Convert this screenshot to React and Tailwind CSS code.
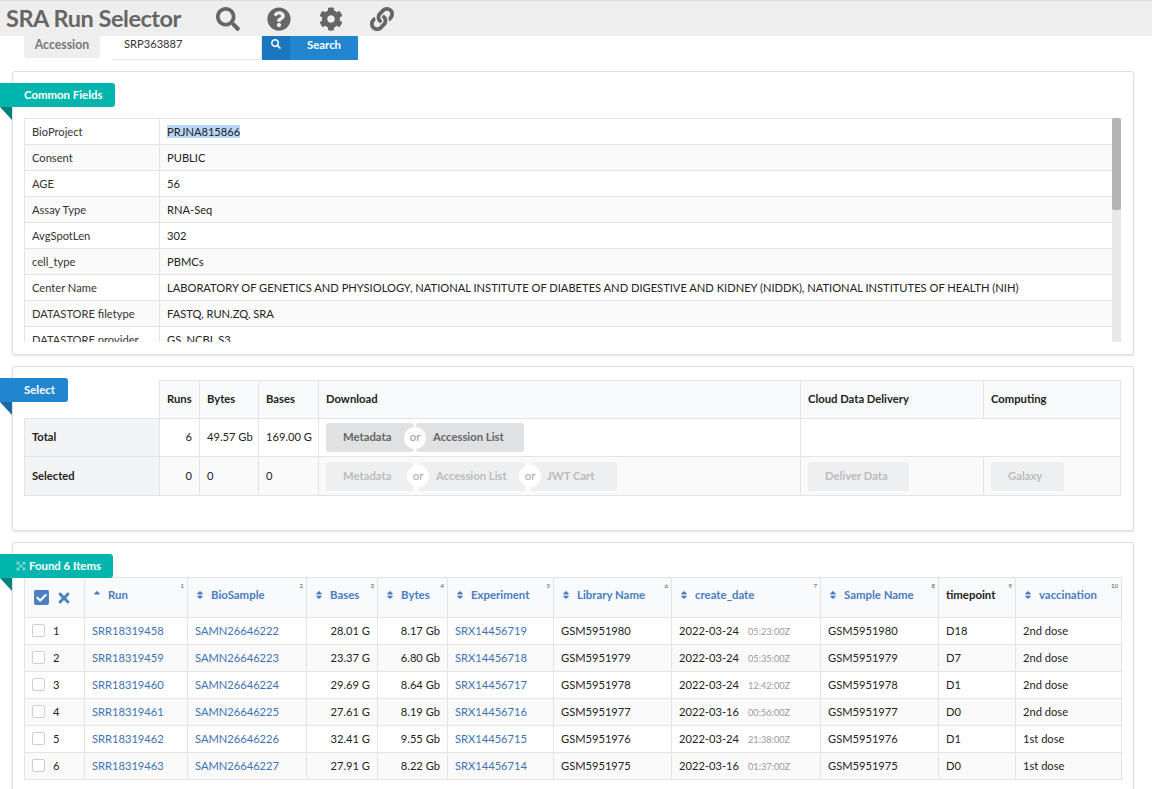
import { FaSearch, FaQuestionCircle, FaCog, FaLink, FaCheckSquare, FaTimes, FaSort, FaSortUp, FaExpandArrowsAlt } from "react-icons/fa";

const fields = [
  ["BioProject", "PRJNA815866"],
  ["Consent", "PUBLIC"],
  ["AGE", "56"],
  ["Assay Type", "RNA-Seq"],
  ["AvgSpotLen", "302"],
  ["cell_type", "PBMCs"],
  ["Center Name", "LABORATORY OF GENETICS AND PHYSIOLOGY, NATIONAL INSTITUTE OF DIABETES AND DIGESTIVE AND KIDNEY (NIDDK), NATIONAL INSTITUTES OF HEALTH (NIH)"],
  ["DATASTORE filetype", "FASTQ, RUN.ZQ, SRA"],
  ["DATASTORE provider", "GS, NCBI, S3"],
];

const rows = [
  ["SRR18319458", "SAMN26646222", "28.01 G", "8.17 Gb", "SRX14456719", "GSM5951980", "2022-03-24", "05:23:00Z", "D18", "2nd dose"],
  ["SRR18319459", "SAMN26646223", "23.37 G", "6.80 Gb", "SRX14456718", "GSM5951979", "2022-03-24", "05:35:00Z", "D7", "2nd dose"],
  ["SRR18319460", "SAMN26646224", "29.69 G", "8.64 Gb", "SRX14456717", "GSM5951978", "2022-03-24", "12:42:00Z", "D1", "2nd dose"],
  ["SRR18319461", "SAMN26646225", "27.61 G", "8.19 Gb", "SRX14456716", "GSM5951977", "2022-03-16", "00:56:00Z", "D0", "2nd dose"],
  ["SRR18319462", "SAMN26646226", "32.41 G", "9.55 Gb", "SRX14456715", "GSM5951976", "2022-03-24", "21:38:00Z", "D1", "1st dose"],
  ["SRR18319463", "SAMN26646227", "27.91 G", "8.22 Gb", "SRX14456714", "GSM5951975", "2022-03-16", "01:37:00Z", "D0", "1st dose"],
];

const headers = [
  { label: "Run", n: 1, w: "w-[103px]", up: true },
  { label: "BioSample", n: 2, w: "w-[119px]" },
  { label: "Bases", n: 3, w: "w-[71px]" },
  { label: "Bytes", n: 4, w: "w-[70px]" },
  { label: "Experiment", n: 5, w: "w-[106px]" },
  { label: "Library Name", n: 6, w: "w-[118px]" },
  { label: "create_date", n: 7, w: "w-[149px]" },
  { label: "Sample Name", n: 8, w: "w-[118px]" },
  { label: "timepoint", n: 9, w: "w-[77px]", plain: true },
  { label: "vaccination", n: 10, w: "w-[106px]" },
];

const Ribbon = ({ bg, fold, className, children }) => (
  <div className={`absolute left-0 z-10 ${className}`}>
    <div className={`flex h-6 items-center rounded-r-[3px] text-[11.4px] font-bold text-white ${bg}`}>{children}</div>
    <div className={`h-[13px] w-3 ${fold} [clip-path:polygon(0_0,100%_0,100%_100%)]`} />
  </div>
);

const Card = ({ className, children }) => (
  <section className={`ml-3 mr-[18px] rounded-[3px] border border-[#dedede] bg-white shadow-[0_1px_2px_rgba(34,36,38,0.12)] ${className}`}>
    {children}
  </section>
);

const th = "border border-[#e3e4e5] bg-[#f9fafb] px-[7px] text-left font-bold";
const td = "border border-[#e3e4e5] px-[7px]";

const GreyButton = ({ w, off, pad, children }) => (
  <span className={`flex h-[29px] items-center whitespace-nowrap rounded-[3px] text-[11.3px] font-bold ${w} ${pad} ${off ? "bg-[#eeeff0] text-[#bcbcbc]" : "bg-[#e0e1e2] text-[#666666]"}`}>
    {children}
  </span>
);

const Or = ({ off }) => (
  <span className={`z-10 -mx-[10px] flex h-[22px] w-[22px] shrink-0 items-center justify-center self-center rounded-full bg-white text-[11.3px] ${off ? "text-[#a9a9a9]" : "text-[#9a9a9a]"}`}>
    or
  </span>
);

export default function App() {
  return (
    <div className="relative h-[789px] overflow-hidden bg-white text-[11.15px] text-[#222222] [font-family:Lato,'Noto_Sans',sans-serif]">
      <header className="flex h-9 items-center border-t border-[#dcdcdc] bg-[#eeeeee] pl-1.5 text-[#666666]">
        <h1 className="w-[210px] text-[23.5px] font-bold tracking-[-0.45px]">SRA Run Selector</h1>
        <div className="flex items-center gap-[27.3px]">
          <FaSearch size={24} />
          <FaQuestionCircle size={24} />
          <FaCog size={24} />
          <FaLink size={24} />
        </div>
      </header>

      <div className="flex h-6 items-start pl-6">
        <div className="flex h-[22px] w-[76px] items-center justify-center rounded-b-[3px] bg-[#eeeeee] pb-1 text-[12.3px] font-bold text-[#777777]">Accession</div>
        <div className="ml-3 flex h-6 w-[150px] items-center rounded-br-[3px] border-b border-r border-[#e4e4e4] pb-1.5 pl-3 text-[#333333]">SRP363887</div>
        <div className="flex h-6 w-24 bg-[#2185d0] text-white">
          <span className="flex h-full w-7 justify-center bg-[#1a76bd] pt-[3px]"><FaSearch size={10} /></span>
          <span className="flex flex-1 items-center justify-center pb-1.5 text-[11.4px] font-bold">Search</span>
        </div>
      </div>

      <Card className="relative mt-[11px] h-[284px] pt-[46px]">
        <div className="ml-[11px] mr-3 h-[224px] overflow-hidden">
          <div className="flex h-full">
            <table className="h-fit w-[1088px] table-fixed border-collapse">
              <tbody>
                {fields.map(([name, value], i) => (
                  <tr key={name} className={`h-[26px] ${i % 2 ? "bg-[#fafafa]" : "bg-white"}`}>
                    <td className={`${td} w-[135px] pt-px text-[#333333]`}>{name}</td>
                    <td className={`${td} border-r-0 pt-px`}>
                      {i === 0 ? <span className="bg-[#b9d6fb]">{value}</span> : value}
                    </td>
                  </tr>
                ))}
              </tbody>
            </table>
            <div className="h-full w-[9px] shrink-0 bg-[#e8e8e8]">
              <div className="h-[92px] rounded-[2px] bg-[#b4b4b4]" />
            </div>
          </div>
        </div>
      </Card>
      <Ribbon bg="bg-[#00b5ad] w-[115px] pl-6" fold="bg-[#00827c]" className="top-[83px]">Common Fields</Ribbon>

      <Card className="mt-[11px] h-[165px] pt-[13px]">
        <table className="ml-[11px] w-[1097px] table-fixed border-collapse">
          <thead>
            <tr className="h-[38px] text-[11.25px]">
              <th className="w-[135px] border-b border-[#e3e4e5]" />
              <th className={`${th} w-10`}>Runs</th>
              <th className={`${th} w-[59px]`}>Bytes</th>
              <th className={`${th} w-[60px]`}>Bases</th>
              <th className={`${th} w-[482px]`}>Download</th>
              <th className={`${th} w-[183px]`}>Cloud Data Delivery</th>
              <th className={th}>Computing</th>
            </tr>
          </thead>
          <tbody>
            <tr className="h-[38px]">
              <td className={`${td} bg-[#f3f4f5] font-bold`}>Total</td>
              <td className={`${td} text-right`}>6</td>
              <td className={`${td} whitespace-nowrap`}>49.57 Gb</td>
              <td className={`${td} whitespace-nowrap`}>169.00 G</td>
              <td className={td}>
                <div className="flex">
                  <GreyButton w="w-[88px]" pad="pl-[17px]">Metadata</GreyButton>
                  <Or />
                  <GreyButton w="w-[108px]" pad="pl-[17px]">Accession List</GreyButton>
                </div>
              </td>
              <td className={`${td} border-r-0`} />
              <td className={`${td} border-l-0`} />
            </tr>
            <tr className="h-[39px] bg-[#fafafa]">
              <td className={`${td} bg-[#f3f4f5] font-bold`}>Selected</td>
              <td className={`${td} text-right`}>0</td>
              <td className={td}>0</td>
              <td className={td}>0</td>
              <td className={td}>
                <div className="flex">
                  <GreyButton off w="w-[87px]" pad="pl-[17px]">Metadata</GreyButton>
                  <span className="w-1" />
                  <Or off />
                  <GreyButton off w="w-[106px]" pad="pl-[17px]">Accession List</GreyButton>
                  <span className="w-1" />
                  <Or off />
                  <GreyButton off w="w-[86px]" pad="pl-4">JWT Cart</GreyButton>
                </div>
              </td>
              <td className={td}>
                <GreyButton off w="w-[101px]" pad="pl-[17px]">Deliver Data</GreyButton>
              </td>
              <td className={td}>
                <GreyButton off w="w-[73px]" pad="pl-[17px]">Galaxy</GreyButton>
              </td>
            </tr>
          </tbody>
        </table>
      </Card>
      <Ribbon bg="bg-[#2185d0] w-[68px] pl-6" fold="bg-[#1a69a4]" className="top-[378px]">Select</Ribbon>

      <Card className="mt-[11px] h-[300px] pt-[34px]">
        <table className="ml-[11px] w-[1096px] table-fixed border-collapse">
          <thead>
            <tr className="h-10 text-[11.4px]">
              <th className={`${th} w-[60px]`}>
                <div className="flex items-center gap-1.5 pl-px text-[#4a7fc1]">
                  <FaCheckSquare size={17} />
                  <FaTimes size={16} />
                </div>
              </th>
              {headers.map((h) => (
                <th key={h.label} className={`${th} ${h.w} relative whitespace-nowrap align-top pt-2 ${h.plain ? "text-[#222222]" : "text-[#4a7cbf]"}`}>
                  <span className="flex items-center gap-1.5">
                    {!h.plain && (h.up ? <FaSortUp size={10} /> : <FaSort size={10} />)}
                    {h.label}
                  </span>
                  <span className="absolute top-[3px] right-[3px] text-[6px] font-normal text-[#555555]">{h.n}</span>
                </th>
              ))}
            </tr>
          </thead>
          <tbody>
            {rows.map((r, i) => (
              <tr key={r[0]} className={`h-[27px] ${i % 2 ? "bg-[#fafafa]" : "bg-white"}`}>
                <td className={td}>
                  <div className="flex items-center gap-2">
                    <span className="h-[13px] w-[13px] rounded-[2px] border border-[#cfcfcf] bg-white" />
                    <span>{i + 1}</span>
                  </div>
                </td>
                <td className={`${td} text-[#3d72b4]`}>{r[0]}</td>
                <td className={`${td} text-[#3d72b4]`}>{r[1]}</td>
                <td className={`${td} text-right`}>{r[2]}</td>
                <td className={`${td} text-right`}>{r[3]}</td>
                <td className={`${td} text-[#3d72b4]`}>{r[4]}</td>
                <td className={td}>{r[5]}</td>
                <td className={`${td} whitespace-nowrap`}>
                  {r[6]}
                  <span className="ml-[9px] text-[9.2px] text-[#999999]">{r[7]}</span>
                </td>
                <td className={td}>{r[5]}</td>
                <td className={td}>{r[8]}</td>
                <td className={td}>{r[9]}</td>
              </tr>
            ))}
          </tbody>
        </table>
      </Card>
      <Ribbon bg="bg-[#00b5ad] w-[113px] pl-4 gap-[3px]" fold="bg-[#00827c]" className="top-[554px]">
        <FaExpandArrowsAlt size={10} className="text-[#7fd9d4]" />
        Found 6 Items
      </Ribbon>
    </div>
  );
}
